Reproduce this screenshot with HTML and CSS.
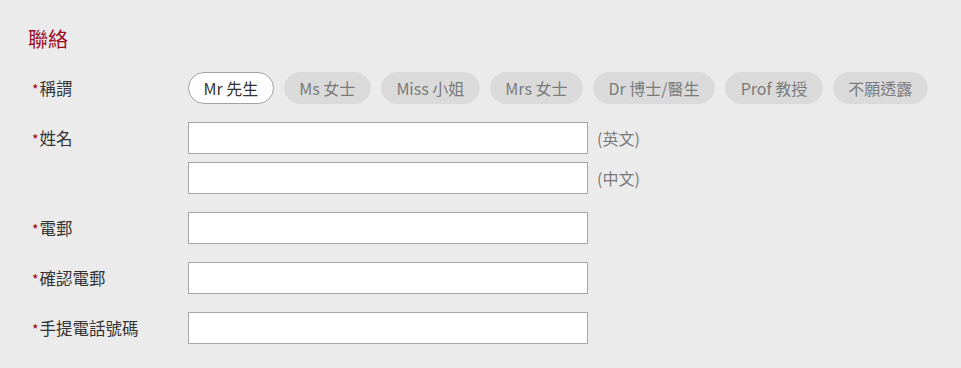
FILE: index.html
```html
<!DOCTYPE html>
<html>
<head>
  <meta charset="utf-8">
  <title>聯絡</title>
  <link rel="stylesheet" href="styles.css">
</head>
<body>
  <div class="section">
    <h2 class="section-title">聯絡</h2>

    <div class="row">
      <div class="label"><span class="req">*</span>稱謂</div>
      <div class="field pills">
        <button class="pill active">Mr 先生</button>
        <button class="pill">Ms 女士</button>
        <button class="pill">Miss 小姐</button>
        <button class="pill">Mrs 女士</button>
        <button class="pill">Dr 博士/醫生</button>
        <button class="pill">Prof 教授</button>
        <button class="pill">不願透露</button>
      </div>
    </div>

    <div class="row">
      <div class="label"><span class="req">*</span>姓名</div>
      <div class="field stack">
        <div class="line"><input type="text" class="text-input"><span class="hint">(英文)</span></div>
        <div class="line"><input type="text" class="text-input"><span class="hint">(中文)</span></div>
      </div>
    </div>

    <div class="row">
      <div class="label"><span class="req">*</span>電郵</div>
      <div class="field"><input type="text" class="text-input"></div>
    </div>

    <div class="row">
      <div class="label"><span class="req">*</span>確認電郵</div>
      <div class="field"><input type="text" class="text-input"></div>
    </div>

    <div class="row">
      <div class="label"><span class="req">*</span>手提電話號碼</div>
      <div class="field"><input type="text" class="text-input"></div>
    </div>
  </div>
</body>
</html>
```

FILE: styles.css
```css
body {
  margin: 0;
  background: #ebebeb;
  color: #333;
  font-family: 'Noto Sans CJK TC', 'Noto Sans', sans-serif;
}
.section {
  padding: 25px 28px 0;
}
.section-title {
  margin: 0 0 20px;
  font-size: 20px;
  font-weight: normal;
  line-height: 27px;
  color: #9b0b1f;
}
.row {
  display: flex;
  margin-bottom: 18px;
}
.label {
  width: 160px;
  height: 32px;
  flex: none;
  font-size: 16.5px;
  line-height: 32px;
  padding-left: 4px;
  box-sizing: border-box;
  white-space: nowrap;
}
.req {
  color: #a0001a;
  font-size: 14px;
  line-height: 1;
  margin-right: 1px;
}
.field {
  display: flex;
}
.pills {
  gap: 10px;
}
.pill {
  flex: none;
  height: 32px;
  padding: 0 14.5px;
  border: 1px solid #dadada;
  border-radius: 16px;
  background: #dadada;
  color: #7a7a7a;
  font-family: inherit;
  font-size: 16px;
  white-space: nowrap;
  cursor: pointer;
}
.pill.active {
  background: #fff;
  border-color: #a3a3a3;
  color: #333;
}
.stack {
  flex-direction: column;
  gap: 8px;
}
.line {
  display: flex;
  align-items: center;
}
.text-input {
  width: 400px;
  height: 32px;
  box-sizing: border-box;
  margin: 0;
  border: 1px solid #a6a6a6;
  background: #fff;
}
.hint {
  margin-left: 9px;
  font-size: 16px;
  color: #7a7a7a;
}
```
